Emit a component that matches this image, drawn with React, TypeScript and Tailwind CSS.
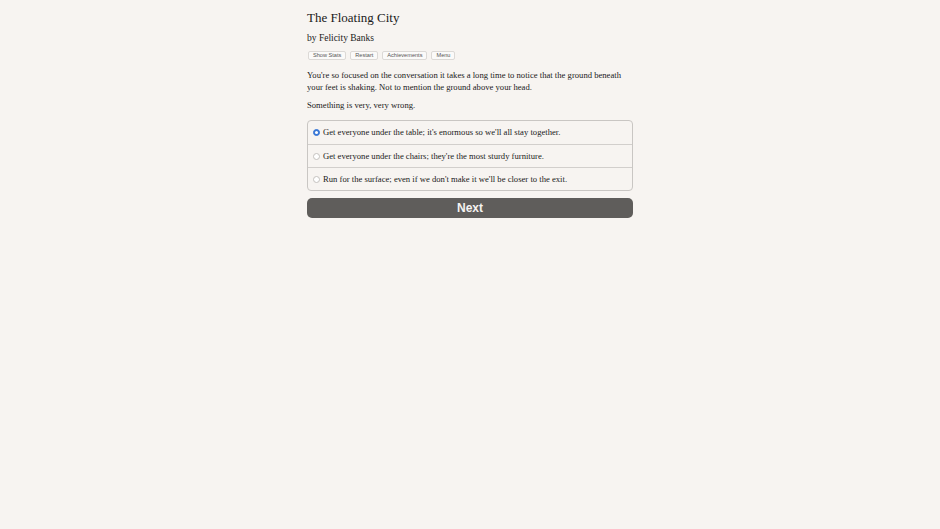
import React, { useState } from 'react';

const OPTIONS = [
  "Get everyone under the table; it's enormous so we'll all stay together.",
  "Get everyone under the chairs; they're the most sturdy furniture.",
  "Run for the surface; even if we don't make it we'll be closer to the exit.",
];

const App: React.FC = () => {
  const [choice, setChoice] = useState(0);

  return (
    <div className="min-h-screen w-full bg-[#f7f4f1] text-[#1a1a1a]" style={{ fontFamily: '"Liberation Serif", "DejaVu Serif", serif' }}>
      <div className="mx-auto w-[326px] pt-[9px]">
        <h1 className="text-[13px] leading-[18px]">The Floating City</h1>
        <h2 className="mt-[5px] text-[9.5px] leading-[12px]">by Felicity Banks</h2>

        {/* Toolbar */}
        <div className="mt-[7px] flex gap-[4px] pl-[1px]" style={{ fontFamily: '"Liberation Sans", Arial, sans-serif' }}>
          {['Show Stats', 'Restart', 'Achievements', 'Menu'].map(label => (
            <button
              key={label}
              className="h-[9px] rounded-[2px] border border-[#dcd9d6] bg-[#fbfaf9] px-[4px] text-[5.6px] leading-[7px] text-[#555]"
            >
              {label}
            </button>
          ))}
        </div>

        <p className="mt-[9px] text-[8.65px] leading-[12px]">
          You're so focused on the conversation it takes a long time to notice that the ground beneath your feet is shaking. Not to mention the ground above your head.
        </p>
        <p className="mt-[6px] text-[8.65px] leading-[12px]">Something is very, very wrong.</p>

        {/* Choices */}
        <div className="mt-[9px] overflow-hidden rounded-[4px] border border-[#c9c6c3]">
          {OPTIONS.map((opt, i) => (
            <label
              key={i}
              onClick={() => setChoice(i)}
              className={`flex h-[23px] cursor-pointer items-center gap-[3px] pl-[5px] text-[8.65px] ${i > 0 ? 'border-t border-[#d2cfcc]' : ''}`}
            >
              <span
                className={`flex h-[7px] w-[7px] items-center justify-center rounded-full border ${choice === i ? 'border-[#3a78d6] bg-[#3a78d6]' : 'border-[#c4c1be] bg-white'}`}
              >
                {choice === i && <span className="h-[3px] w-[3px] rounded-full bg-white" />}
              </span>
              <span>{opt}</span>
            </label>
          ))}
        </div>

        <button
          className="mt-[7px] h-[20px] w-full rounded-[5px] bg-[#5f5d5b] text-[12px] font-bold text-[#f5f3f1]"
          style={{ fontFamily: '"Liberation Sans", Arial, sans-serif' }}
        >
          Next
        </button>
      </div>
    </div>
  );
};

export default App;
